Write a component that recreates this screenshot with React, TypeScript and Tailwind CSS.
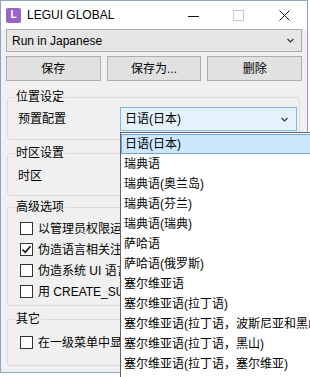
import React from 'react';

const font = {fontFamily: '"Liberation Sans", "Noto Sans CJK SC", sans-serif'};

const languages = [
	'日语(日本)',
	'瑞典语',
	'瑞典语(奥兰岛)',
	'瑞典语(芬兰)',
	'瑞典语(瑞典)',
	'萨哈语',
	'萨哈语(俄罗斯)',
	'塞尔维亚语',
	'塞尔维亚语(拉丁语)',
	'塞尔维亚语(拉丁语，波斯尼亚和黑山)',
	'塞尔维亚语(拉丁语，黑山)',
	'塞尔维亚语(拉丁语，塞尔维亚)',
];

function Chevron() {
	return (
		<svg width="7" height="5" viewBox="0 0 7 5" className="shrink-0">
			<polyline points="0.5,1 3.5,4 6.5,1" fill="none" stroke="#333" strokeWidth="1.2" />
		</svg>
	);
}

// rows are clipped where the open dropdown covers them
function CheckBox({checked, label}: {checked?: boolean; label: string}) {
	return (
		<div className="h-[21px] w-[112px] overflow-hidden flex items-center pl-[12px] whitespace-nowrap">
			<div className="w-[13px] h-[13px] border border-[#333333] bg-white flex items-center justify-center shrink-0">
				{checked && (
					<svg width="11" height="11" viewBox="0 0 11 11">
						<polyline points="1.5,5.5 4.2,8.3 9.5,2.2" fill="none" stroke="#111" strokeWidth="1.6" />
					</svg>
				)}
			</div>
			<span className="ml-[5px] text-[12px] text-black">{label}</span>
		</div>
	);
}

function Group({title, className, children}: {title: string; className?: string; children: React.ReactNode}) {
	return (
		<fieldset className={`border border-[#dcdcdc] rounded-[3px] ml-[1px] mr-[2px] ${className ?? ''}`}>
			<legend className="ml-[7px] px-[1px] text-[12px] leading-[16px] text-black">{title}</legend>
			{children}
		</fieldset>
	);
}

export default function App() {
	return (
		<div className="relative w-[310px] h-[377px] bg-white overflow-hidden" style={font}>
			<div className="w-[308px] h-[373px] border border-[#8aa5c5] flex flex-col bg-[#f0f0f0]">
				{/* Title bar */}
				<div className="h-[28px] bg-white flex items-center shrink-0">
					<div className="ml-[5px] w-[15px] h-[15px] rounded-[2px] bg-[#9a63c6] flex items-center justify-center text-white text-[10px] font-bold leading-none">
						L
					</div>
					<span className="ml-[6px] text-[12px] text-black">LEGUI GLOBAL</span>
					<div className="flex-1" />
					<svg width="11" height="11" viewBox="0 0 11 11" className="mr-[34px]">
						<line x1="0" y1="6.5" x2="11" y2="6.5" stroke="#111" strokeWidth="1" />
					</svg>
					<svg width="11" height="11" viewBox="0 0 11 11" className="mr-[35px]">
						<rect x="0.5" y="0.5" width="10" height="10" fill="none" stroke="#c8c8c8" strokeWidth="1" />
					</svg>
					<svg width="11" height="11" viewBox="0 0 11 11" className="mr-[17px]">
						<line x1="0.5" y1="0.5" x2="10.5" y2="10.5" stroke="#111" strokeWidth="1" />
						<line x1="10.5" y1="0.5" x2="0.5" y2="10.5" stroke="#111" strokeWidth="1" />
					</svg>
				</div>

				{/* Client area */}
				<div className="flex-1 px-[5px]">
					<div className="h-[23px] border border-[#acacac] bg-[#e6e6e6] flex items-center pl-[5px] pr-[7px]">
						<span className="flex-1 text-[12px] text-black">Run in Japanese</span>
						<Chevron />
					</div>

					<div className="mt-[4px] grid grid-cols-3 gap-[6px]">
						{['保存', '保存为...', '删除'].map(t => (
							<button
								key={t}
								className="h-[25px] border border-[#adadad] bg-[#e1e1e1] text-[12px] text-black"
							>
								{t}
							</button>
						))}
					</div>

					<Group title="位置设定" className="mt-[8px]">
						<div className="mt-[2px] mb-[8px] h-[24px] flex items-center">
							<span className="ml-[10px] w-[102px] text-[12px] text-black">预置配置</span>
							<div className="w-[177px] h-[24px] border border-[#7eb4ea] bg-[#e5f1fb] flex items-center pl-[4px] pr-[8px]">
								<span className="flex-1 text-[12px] text-black">日语(日本)</span>
								<Chevron />
							</div>
						</div>
					</Group>

					<Group title="时区设置" className="mt-[5px]">
						<div className="mt-[3px] mb-[7px] h-[24px] flex items-center">
							<span className="ml-[10px] w-[102px] text-[12px] text-black">时区</span>
						</div>
					</Group>

					<Group title="高级选项" className="mt-[3px]">
						<div className="pt-[3px] pb-[3px]">
							<CheckBox label="以管理员权限运行" />
							<CheckBox checked label="伪造语言相关注册表" />
							<CheckBox label="伪造系统 UI 语言" />
							<CheckBox label="用 CREATE_SUSPENDED 启动" />
						</div>
					</Group>

					<Group title="其它" className="mt-[5px]">
						<div className="pt-[5px] pb-[12px]">
							<CheckBox label="在一级菜单中显示" />
						</div>
					</Group>
				</div>
			</div>

			{/* Open dropdown list */}
			<div className="absolute left-[120px] top-[132px] w-[200px] h-[260px] bg-white border border-[#646464] pt-[1px]">
				{languages.map((l, i) => (
					<div
						key={l}
						className={`h-[20px] flex items-center pl-[3px] text-[12px] text-black whitespace-nowrap ${
							i === 0 ? 'bg-[#cce8ff] border border-[#6fa3d6] pl-[2px]' : ''
						}`}
					>
						{l}
					</div>
				))}
			</div>
		</div>
	);
}
